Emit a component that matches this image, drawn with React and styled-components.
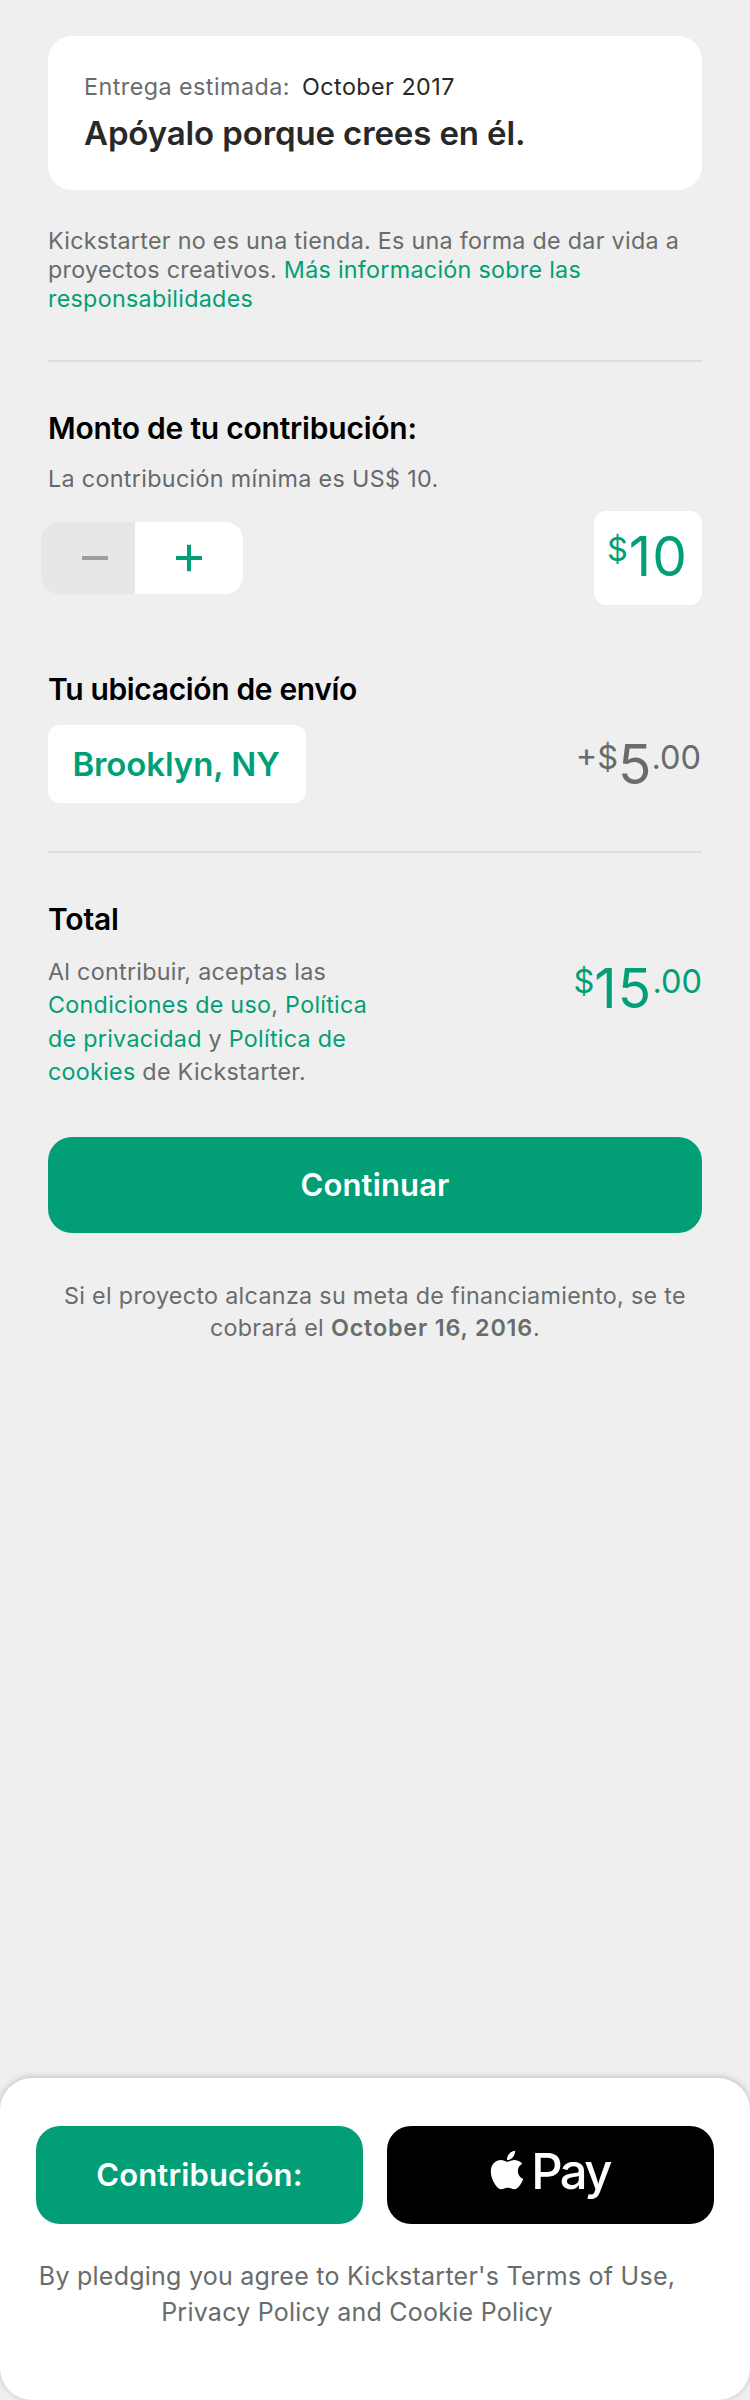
import React from "react";
import styled, { createGlobalStyle } from "styled-components";
import { FaApple } from "react-icons/fa6";

const green = "#029f76";
const gray = "#686c6b";

const GlobalStyle = createGlobalStyle`
  *, *::before, *::after { box-sizing: border-box; }
  body {
    margin: 0;
    background: #efefef;
    font-family: Inter, "Liberation Sans", sans-serif;
  }
  h1, h2, p { margin: 0; }
  button { border: 0; padding: 0; font: inherit; cursor: pointer; }
  a { color: ${green}; text-decoration: none; }
`;

const Screen = styled.div`
  display: flex;
  flex-direction: column;
  width: 750px;
  min-height: 2400px;
  background: #efefef;
`;

const Content = styled.main`
  padding: 36px 48px 0;
`;

const RewardCard = styled.section`
  display: flex;
  flex-direction: column;
  gap: 11px;
  height: 154px;
  padding: 36px 36px 0;
  border-radius: 24px;
  background: #fff;
`;

const Delivery = styled.p`
  display: flex;
  gap: 12px;
  font-size: 23.3px;
  line-height: 30px;
  letter-spacing: 0.47px;
  color: ${gray};
`;

const DeliveryDate = styled.span`
  color: #282828;
`;

const RewardTitle = styled.h1`
  font-size: 33px;
  font-weight: 600;
  line-height: 40px;
  letter-spacing: -0.12px;
  color: #282828;
`;

const BodyText = styled.p`
  font-size: 23.3px;
  line-height: ${(p) => p.$leading}px;
  letter-spacing: ${(p) => p.$tracking || 0.28}px;
  color: ${(p) => p.$color || gray};
  text-align: ${(p) => (p.$center ? "center" : "left")};
  white-space: nowrap;
`;

const Disclaimer = styled(BodyText)`
  margin-top: 36px;
`;

const Divider = styled.hr`
  height: 2px;
  margin: ${(p) => p.$top}px 0 ${(p) => p.$bottom}px;
  border: 0;
  background: #dcdedd;
`;

const Heading = styled.h2`
  font-size: 30px;
  font-weight: 600;
  line-height: 40px;
  letter-spacing: ${(p) => p.$tracking}px;
  color: #000;
`;

const MinimumNote = styled(BodyText)`
  margin-top: 16px;
`;

const PledgeRow = styled.div`
  display: flex;
  align-items: center;
  justify-content: space-between;
  margin: 17px 0 64px;
`;

const Stepper = styled.div`
  display: flex;
  height: 72px;
  margin-left: -7px;
  border-radius: 18px;
  overflow: hidden;
`;

const StepButton = styled.button`
  display: flex;
  align-items: center;
  width: ${(p) => p.$width}px;
  padding-left: 40px;
  background: ${(p) => (p.disabled ? "#e7e7e7" : "#fff")};
  color: ${(p) => (p.disabled ? "#9b9f9e" : green)};
`;

const Price = styled.div`
  display: flex;
  align-items: flex-start;
  color: ${(p) => p.$color};
`;

const PriceSmall = styled.span`
  font-size: 32.5px;
  line-height: 24px;
  letter-spacing: ${(p) => p.$tracking || 0}px;
  margin-top: 2px;
  margin-right: ${(p) => p.$right || 0}px;
`;

const PriceBig = styled.span`
  font-size: 55px;
  line-height: 41px;
  letter-spacing: ${(p) => p.$tracking || 0}px;
`;

const AmountBox = styled.div`
  width: 108px;
  height: 94px;
  padding: 25px 0 0 13px;
  border-radius: 12px;
  background: #fff;
`;

const ShippingRow = styled.div`
  display: flex;
  align-items: center;
  justify-content: space-between;
  margin-top: 16px;
`;

const LocationButton = styled.button`
  width: 258px;
  height: 78px;
  padding-right: 2px;
  border-radius: 12px;
  background: #fff;
  color: ${green};
  font-size: 33px;
  font-weight: 600;
  letter-spacing: -0.1px;
`;

const ShippingPrice = styled(Price)`
  margin: 1px 1px 0 0;
`;

const TotalRow = styled.div`
  display: flex;
  justify-content: space-between;
  height: 133px;
  margin: 16px 0 49px;
`;

const TotalPrice = styled(Price)`
  margin-top: 13px;
`;

const Button = styled.button`
  display: flex;
  align-items: center;
  justify-content: center;
  width: 100%;
  height: ${(p) => p.$height}px;
  padding-bottom: 2px;
  border-radius: 24px;
  background: ${(p) => (p.$dark ? "#000" : green)};
  color: #fff;
  font-size: 31px;
  font-weight: 600;
  letter-spacing: 0.15px;
`;

const ChargeNote = styled(BodyText)`
  margin-top: 47px;
  b { font-weight: 600; letter-spacing: 0.85px; }
`;

const Footer = styled.footer`
  height: 322px;
  margin-top: auto;
  padding: 48px 36px 0;
  border-radius: 32px;
  background: #fff;
  box-shadow: 0 -1px 6px rgba(0, 0, 0, 0.22);
`;

const FooterButtons = styled.div`
  display: grid;
  grid-template-columns: 1fr 1fr;
  gap: 24px;
`;

const PayMark = styled.span`
  display: flex;
  align-items: center;
  gap: 2px;
  margin: -5px 6px 0 0;
  svg { margin-top: -4px; }
`;

const PayWord = styled.span`
  font-size: 49px;
  font-weight: 500;
  line-height: 60px;
  letter-spacing: -2.7px;
`;

const Legal = styled.p`
  width: 642px;
  margin-top: 34px;
  font-size: 25px;
  line-height: 36px;
  letter-spacing: 0.24px;
  text-align: center;
  white-space: nowrap;
  color: ${gray};
`;

const Minus = () => (
  <svg width="28" height="28" viewBox="0 0 28 28">
    <path d="M1 14h26" stroke="currentColor" strokeWidth="4" />
  </svg>
);

const Plus = () => (
  <svg width="28" height="28" viewBox="0 0 28 28">
    <path d="M1 14h26M14 0.8v26.4" stroke="currentColor" strokeWidth="4" />
  </svg>
);

export default function App() {
  return (
    <Screen>
      <GlobalStyle />
      <Content>
        <RewardCard>
          <Delivery>
            <span>Entrega estimada:</span>
            <DeliveryDate>October 2017</DeliveryDate>
          </Delivery>
          <RewardTitle>Apóyalo porque crees en él.</RewardTitle>
        </RewardCard>

        <Disclaimer $leading={29}>
          Kickstarter no es una tienda. Es una forma de dar vida a
          <br />
          proyectos creativos.{" "}
          <a>
            Más información sobre las
            <br />
            responsabilidades
          </a>
        </Disclaimer>

        <Divider $top={47} $bottom={46} />

        <Heading $tracking={-0.22}>Monto de tu contribución:</Heading>
        <MinimumNote $leading={30} $tracking={0.33} $color="#67686f">
          La contribución mínima es US$ 10.
        </MinimumNote>
        <PledgeRow>
          <Stepper>
            <StepButton $width={94} disabled aria-label="Menos">
              <Minus />
            </StepButton>
            <StepButton $width={108} aria-label="Más">
              <Plus />
            </StepButton>
          </Stepper>
          <AmountBox>
            <Price $color={green}>
              <PriceSmall $right={1}>$</PriceSmall>
              <PriceBig $tracking={1}>10</PriceBig>
            </Price>
          </AmountBox>
        </PledgeRow>

        <Heading $tracking={-0.35}>Tu ubicación de envío</Heading>
        <ShippingRow>
          <LocationButton>Brooklyn, NY</LocationButton>
          <ShippingPrice $color={gray}>
            <PriceSmall>+$</PriceSmall>
            <PriceBig>5</PriceBig>
            <PriceSmall>.00</PriceSmall>
          </ShippingPrice>
        </ShippingRow>

        <Divider $top={48} $bottom={46} />

        <Heading $tracking={-0.17}>Total</Heading>
        <TotalRow>
          <BodyText $leading={33.3}>
            Al contribuir, aceptas las
            <br />
            <a>Condiciones de uso</a>, <a>Política</a>
            <br />
            <a>de privacidad</a> y <a>Política de</a>
            <br />
            <a>cookies</a> de Kickstarter.
          </BodyText>
          <TotalPrice $color={green}>
            <PriceSmall>$</PriceSmall>
            <PriceBig $tracking={1.2}>15</PriceBig>
            <PriceSmall>.00</PriceSmall>
          </TotalPrice>
        </TotalRow>

        <Button $height={96}>Continuar</Button>
        <ChargeNote $leading={32} $tracking={0.31} $center>
          Si el proyecto alcanza su meta de financiamiento, se te
          <br />
          cobrará el <b>October 16, 2016</b>.
        </ChargeNote>
      </Content>

      <Footer>
        <FooterButtons>
          <Button $height={98}>Contribución:</Button>
          <Button $height={98} $dark>
            <PayMark>
              <FaApple size={44} />
              <PayWord>Pay</PayWord>
            </PayMark>
          </Button>
        </FooterButtons>
        <Legal>
          By pledging you agree to Kickstarter's Terms of Use,
          <br />
          Privacy Policy and Cookie Policy
        </Legal>
      </Footer>
    </Screen>
  );
}
